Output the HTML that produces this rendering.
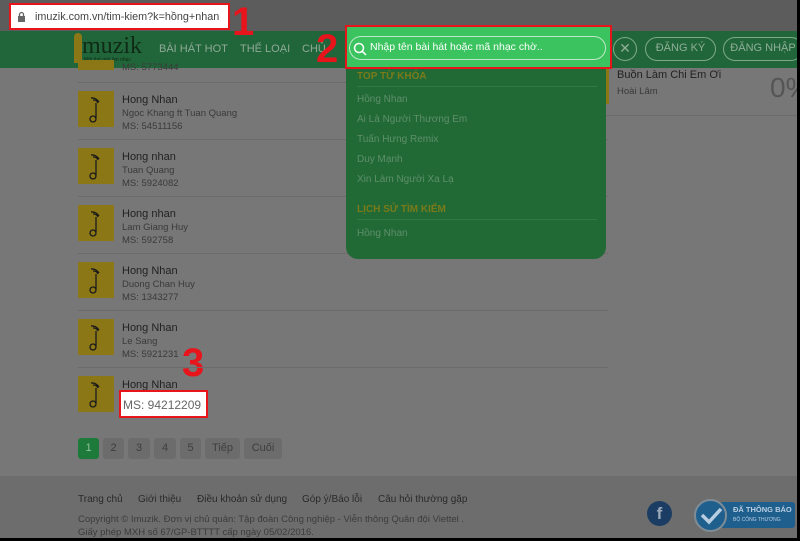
<!DOCTYPE html>
<html><head><meta charset="utf-8"><style>
*{margin:0;padding:0;box-sizing:border-box}
body{width:800px;height:541px;overflow:hidden;background:#000;font-family:"Liberation Sans",sans-serif;position:relative}
#frame{position:absolute;left:0;top:0;width:797px;height:538px;background:#777;overflow:hidden}
.abs{position:absolute;white-space:nowrap}
#top{left:0;top:0;width:797px;height:31px;background:#5c5c5c}
#addr{left:9px;top:3px;width:221px;height:27px;background:#fff;border:2px solid #e8141b;font-size:10.8px;color:#444;padding:6px 0 0 24px;overflow:hidden}
#hdr{left:0;top:31px;width:797px;height:37px;background:#21663a}
.nav{top:43px;color:#8fa996;font-size:11px}
.red{color:#e8141b;font-weight:bold;font-size:40px;line-height:1}
.thumb{width:36px;height:36px;background:#8c7716;left:78px}
.t1{left:122px;font-size:11px;color:#222}
.t2{left:122px;font-size:9.5px;color:#3a3a3a}
.line{left:78px;width:530px;height:1px;background:#6b6b6b}
#dd{left:346px;top:60px;width:260px;height:199px;background:#216a36;border-radius:0 0 12px 12px}
.dk{left:357px;font-size:10px;color:#5f8f6a}
.dh{left:357px;font-size:10px;color:#7a7a1a;font-weight:bold}
.pg{top:438px;height:21px;background:#6c6c6c;border-radius:3px;color:#3e3e3e;font-size:11px;text-align:center;line-height:21px}
#foot{left:0;top:476px;width:797px;height:62px;background:#6d6d6d}
.fl{top:494px;font-size:10px;color:#2a2a2a}
.cp{left:78px;font-size:9.5px;color:#3c3c3c}
.btn{top:37px;height:24px;border:1.5px solid #7fa98a;border-radius:12px;color:#8fae98;font-size:11px;text-align:center;line-height:21px}
</style></head><body><div id="frame">
<div class="abs" id="top"></div>
<div class="abs" id="addr">imuzik.com.vn/tim-kiem?k=hồng+nhan</div>
<svg class="abs" style="left:17px;top:11px" width="9" height="11"><rect x="1" y="5" width="7" height="6" fill="#666"/><path d="M2.5 5V3.5a2 2 0 014 0V5" stroke="#666" fill="none" stroke-width="1.3"/></svg>
<div class="abs" id="hdr"></div>
<div class="abs" style="left:74px;top:33px;width:8px;height:30px;background:#8c7716;border-radius:4px 4px 0 0"></div>
<div class="abs" style="left:82px;top:33px;font-family:'Liberation Serif',serif;font-size:24px;color:#0f2a15">muzik</div>
<div class="abs" style="left:84px;top:57px;font-size:5px;color:#0f2a15">Một thế giới âm nhạc</div>
<div class="abs nav" style="left:159px">BÀI HÁT HOT</div>
<div class="abs nav" style="left:240px">THỂ LOẠI</div>
<div class="abs nav" style="left:302px">CHỦ</div>
<div class="abs red" style="left:232px;top:2px">1</div>
<div class="abs red" style="left:316px;top:29px">2</div>
<div class="abs red" style="left:182px;top:343px">3</div>
<div class="abs btn" style="left:613px;width:24px;font-size:14px">✕</div>
<div class="abs btn" style="left:645px;width:71px">ĐĂNG KÝ</div>
<div class="abs btn" style="left:723px;width:80px">ĐĂNG NHẬP</div>
<div class="abs thumb" style="top:60px;height:10px"></div>
<div class="abs t2" style="top:62px">MS: 5773444</div>
<div class="abs line" style="top:82px"></div>
<div class="abs thumb" style="top:91px"></div><div class="abs t1" style="top:94px">Hong Nhan</div><div class="abs t2" style="top:108px">Ngoc Khang ft Tuan Quang</div><div class="abs t2" style="top:121px">MS: 54511156</div>
<div class="abs line" style="top:139px"></div>
<div class="abs thumb" style="top:148px"></div><div class="abs t1" style="top:151px">Hong nhan</div><div class="abs t2" style="top:165px">Tuan Quang</div><div class="abs t2" style="top:178px">MS: 5924082</div>
<div class="abs line" style="top:196px"></div>
<div class="abs thumb" style="top:205px"></div><div class="abs t1" style="top:208px">Hong nhan</div><div class="abs t2" style="top:222px">Lam Giang Huy</div><div class="abs t2" style="top:235px">MS: 592758</div>
<div class="abs line" style="top:253px"></div>
<div class="abs thumb" style="top:262px"></div><div class="abs t1" style="top:265px">Hong Nhan</div><div class="abs t2" style="top:279px">Duong Chan Huy</div><div class="abs t2" style="top:292px">MS: 1343277</div>
<div class="abs line" style="top:310px"></div>
<div class="abs thumb" style="top:319px"></div><div class="abs t1" style="top:322px">Hong Nhan</div><div class="abs t2" style="top:336px">Le Sang</div><div class="abs t2" style="top:349px">MS: 5921231</div>
<div class="abs line" style="top:367px"></div>
<div class="abs thumb" style="top:376px"></div><div class="abs t1" style="top:379px">Hong Nhan</div>
<div class="abs" style="left:119px;top:390px;width:89px;height:28px;background:#fff;border:2px solid #e8141b;font-size:12px;color:#666;padding:6px 0 0 2px">MS: 94212209</div>
<svg class="abs" style="left:0;top:0" width="120" height="420">
<g fill="none" stroke="#1a1a1a" stroke-width="1.3">
<path d="M96 103v15"/><circle cx="93" cy="119" r="3"/><path d="M93 100a5 5 0 015 3M91 98a8 8 0 018 4"/>
<path d="M96 160v15"/><circle cx="93" cy="176" r="3"/><path d="M93 157a5 5 0 015 3M91 155a8 8 0 018 4"/>
<path d="M96 217v15"/><circle cx="93" cy="233" r="3"/><path d="M93 214a5 5 0 015 3M91 212a8 8 0 018 4"/>
<path d="M96 274v15"/><circle cx="93" cy="290" r="3"/><path d="M93 271a5 5 0 015 3M91 269a8 8 0 018 4"/>
<path d="M96 331v15"/><circle cx="93" cy="347" r="3"/><path d="M93 328a5 5 0 015 3M91 326a8 8 0 018 4"/>
<path d="M96 388v15"/><circle cx="93" cy="404" r="3"/><path d="M93 385a5 5 0 015 3M91 383a8 8 0 018 4"/>
</g></svg>
<div class="abs" style="left:606px;top:68px;width:3px;height:36px;background:#8c7716"></div>
<div class="abs" style="left:617px;top:69px;font-size:11px;color:#222">Buồn Làm Chi Em Ơi</div>
<div class="abs" style="left:617px;top:86px;font-size:9.5px;color:#3a3a3a">Hoài Lâm</div>
<div class="abs" style="left:770px;top:72px;font-size:28px;color:#555">0%</div>
<div class="abs" style="left:606px;top:115px;width:191px;height:1px;background:#6b6b6b"></div>
<div class="abs" id="dd"></div>
<div class="abs" style="left:345px;top:25px;width:267px;height:44px;background:#3ac35e;border:2px solid #e8141b"></div>
<div class="abs" style="left:349px;top:36px;width:257px;height:24px;border:1.5px solid #bfe8c9;border-radius:12px;color:#fff;font-size:10.5px;padding:4px 0 0 20px">Nhập tên bài hát hoặc mã nhạc chờ..</div>
<svg class="abs" style="left:353px;top:42px" width="14" height="14"><circle cx="6" cy="6" r="4.5" stroke="#fff" stroke-width="1.5" fill="none"/><path d="M9.3 9.3L13 13" stroke="#fff" stroke-width="1.5"/></svg>
<div class="abs dh" style="left:357px;top:71px">TOP TỪ KHÓA</div>
<div class="abs" style="left:357px;top:86px;width:240px;height:1px;background:#2e7a44"></div>
<div class="abs dk" style="top:94px">Hồng Nhan</div>
<div class="abs dk" style="top:114px">Ai Là Người Thương Em</div>
<div class="abs dk" style="top:134px">Tuấn Hưng Remix</div>
<div class="abs dk" style="top:154px">Duy Mạnh</div>
<div class="abs dk" style="top:174px">Xin Làm Người Xa Lạ</div>
<div class="abs dh" style="top:204px">LỊCH SỬ TÌM KIẾM</div>
<div class="abs" style="left:357px;top:219px;width:240px;height:1px;background:#2e7a44"></div>
<div class="abs dk" style="top:228px">Hồng Nhan</div>
<div class="abs pg" style="left:78px;width:21px;background:#1e7a3a;color:#8fbf9b">1</div>
<div class="abs pg" style="left:103px;width:21px">2</div>
<div class="abs pg" style="left:128px;width:22px">3</div>
<div class="abs pg" style="left:154px;width:22px">4</div>
<div class="abs pg" style="left:180px;width:21px">5</div>
<div class="abs pg" style="left:205px;width:35px">Tiếp</div>
<div class="abs pg" style="left:244px;width:38px">Cuối</div>
<div class="abs" id="foot"></div>
<div class="abs fl" style="left:78px">Trang chủ</div>
<div class="abs fl" style="left:138px">Giới thiệu</div>
<div class="abs fl" style="left:197px">Điều khoản sử dụng</div>
<div class="abs fl" style="left:302px">Góp ý/Báo lỗi</div>
<div class="abs fl" style="left:378px">Câu hỏi thường gặp</div>
<div class="abs cp" style="top:514px">Copyright © Imuzik. Đơn vị chủ quản: Tập đoàn Công nghiệp - Viễn thông Quân đội Viettel .</div>
<div class="abs cp" style="top:527px">Giấy phép MXH số 67/GP-BTTTT cấp ngày 05/02/2016.</div>
<div class="abs" style="left:647px;top:501px;width:25px;height:25px;border-radius:50%;background:#1c3d63;color:#9aa8b8;font-size:17px;font-weight:bold;text-align:center;line-height:26px">f</div>
<div class="abs" style="left:720px;top:502px;width:75px;height:26px;background:#1f5f8e;border-radius:3px;color:#b9cde0;font-size:7.5px;font-weight:bold;padding:3px 0 0 13px">ĐÃ THÔNG BÁO<div style="font-size:5px;font-weight:normal;margin-top:3px">BỘ CÔNG THƯƠNG</div></div>
<div class="abs" style="left:694px;top:499px;width:33px;height:33px;border-radius:50%;background:#1f5f8e;border:2px solid #7f8c95"></div>
<svg class="abs" style="left:699px;top:506px" width="24" height="20"><path d="M3 9l7 7L22 3" stroke="#b9cde0" stroke-width="3.5" fill="none"/></svg>
</div></body></html>
